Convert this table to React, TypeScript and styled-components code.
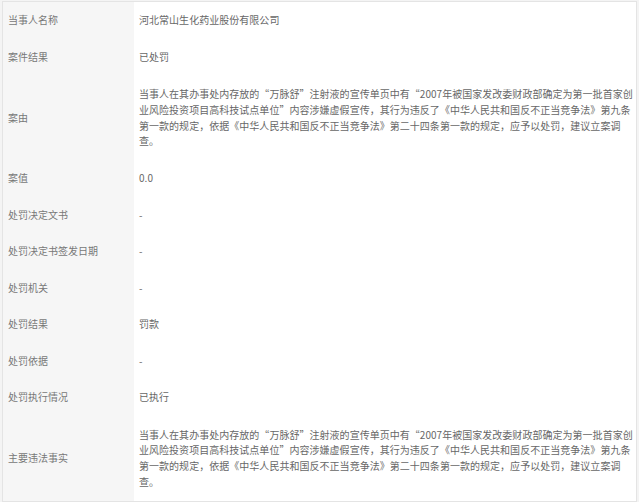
import React from "react";
import styled, { createGlobalStyle } from "styled-components";

const GlobalStyle = createGlobalStyle`
    html, body {
        margin: 0;
        padding: 0;
        background: #ffffff;
    }
    body {
        font-family: "Noto Sans CJK SC", "Noto Sans", sans-serif;
    }
`;

const Table = styled.div`
    margin: 1px 3px 0 2px;
    border: 1px solid #e4e4e4;
    box-shadow: 0 0 0 2px #f4f4f4;
    background: #ffffff;
    display: flex;
    flex-direction: column;
`;

const Row = styled.div<{ $tall?: boolean }>`
    display: grid;
    grid-template-columns: 131px 1fr;
    height: ${(p) => (p.$tall ? "85px" : "36.5px")};
`;

const Label = styled.div`
    background: #f6f6f6;
    color: #787878;
    font-size: 10px;
    line-height: 15.6px;
    padding-left: 5px;
    display: flex;
    align-items: center;
`;

const Value = styled.div`
    color: #676767;
    font-size: 10px;
    letter-spacing: 0.03px;
    line-height: 15.6px;
    padding-left: 5px;
    display: flex;
    align-items: center;
    white-space: nowrap;
`;

const Para = styled.p`
    margin: 0;
`;

const reason = [
    "当事人在其办事处内存放的“万脉舒”注射液的宣传单页中有“2007年被国家发改委财政部确定为第一批首家创",
    "业风险投资项目高科技试点单位”内容涉嫌虚假宣传，其行为违反了《中华人民共和国反不正当竞争法》第九条",
    "第一款的规定，依据《中华人民共和国反不正当竞争法》第二十四条第一款的规定，应予以处罚，建议立案调",
    "查。",
];

interface Item {
    label: string;
    value: string | string[];
}

const items: Item[] = [
    { label: "当事人名称", value: "河北常山生化药业股份有限公司" },
    { label: "案件结果", value: "已处罚" },
    { label: "案由", value: reason },
    { label: "案值", value: "0.0" },
    { label: "处罚决定文书", value: "-" },
    { label: "处罚决定书签发日期", value: "-" },
    { label: "处罚机关", value: "-" },
    { label: "处罚结果", value: "罚款" },
    { label: "处罚依据", value: "-" },
    { label: "处罚执行情况", value: "已执行" },
    { label: "主要违法事实", value: reason },
];

const App: React.FC = () => {
    return (
        <>
            <GlobalStyle />
            <Table>
                {items.map((item) => {
                    const lines = Array.isArray(item.value);
                    return (
                        <Row key={item.label} $tall={lines}>
                            <Label>{item.label}</Label>
                            <Value>
                                {lines ? (
                                    <Para>
                                        {(item.value as string[]).map((l, i) => (
                                            <React.Fragment key={i}>
                                                {l}
                                                {i < (item.value as string[]).length - 1 && <br />}
                                            </React.Fragment>
                                        ))}
                                    </Para>
                                ) : (
                                    item.value
                                )}
                            </Value>
                        </Row>
                    );
                })}
            </Table>
        </>
    );
};

export default App;
